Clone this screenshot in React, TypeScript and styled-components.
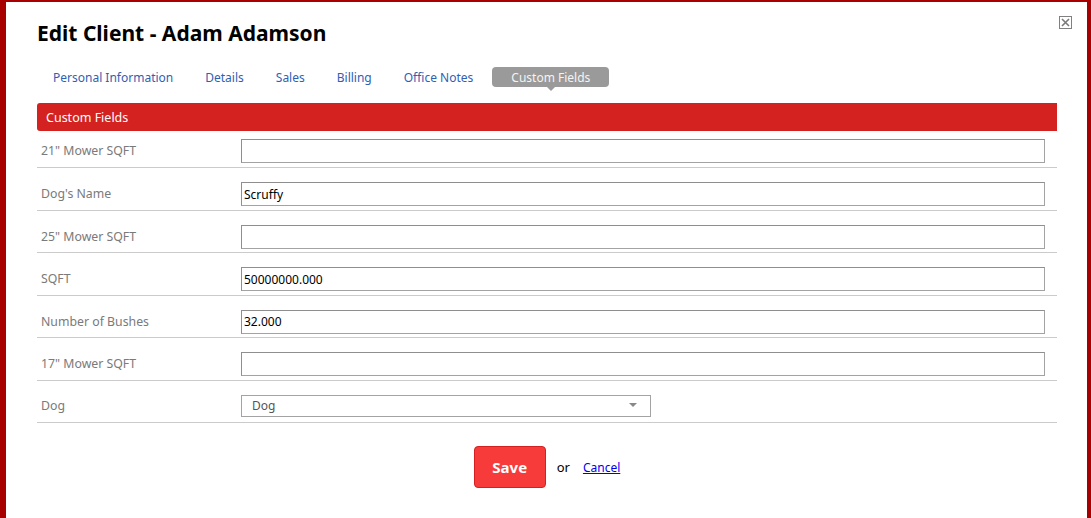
import React from "react";
import styled, { createGlobalStyle } from "styled-components";

const Global = createGlobalStyle`
  html, body { margin: 0; padding: 0; background: #fff; }
  body { font-family: "Noto Sans", "Open Sans", sans-serif; }
  * { box-sizing: border-box; }
`;

const Modal = styled.div`
  position: relative;
  width: 1091px;
  height: 518px;
  border-left: 6px solid #a80000;
  border-top: 2px solid #a80000;
  border-right: 4px solid #a80000;
  padding: 0 30px 0 31px;
  background: #fff;
  overflow: hidden;
`;

const Title = styled.h1`
  margin: 0;
  padding-top: 17px;
  height: 65px;
  font-size: 21px;
  font-weight: 700;
  color: #000;
  line-height: 28px;
`;

const Close = styled.button`
  position: absolute;
  top: 14px;
  right: 15px;
  width: 13px;
  height: 13px;
  padding: 0;
  border: 1px solid #808080;
  background: #fff;
  display: flex;
  align-items: center;
  justify-content: center;
  cursor: pointer;
`;

const Tabs = styled.nav`
  display: flex;
  align-items: center;
  height: 20px;
`;

const Tab = styled.a<{ $active?: boolean }>`
  position: relative;
  display: flex;
  align-items: center;
  height: 20px;
  padding: 0 ${(p) => (p.$active ? 19 : 16)}px;
  margin-left: ${(p) => (p.$active ? 3 : 0)}px;
  font-size: 12px;
  color: ${(p) => (p.$active ? "#f4f4f4" : "#2f5fb3")};
  background: ${(p) => (p.$active ? "#9a9a9a" : "transparent")};
  border-radius: 4px;
  text-decoration: none;
  white-space: nowrap;
  cursor: pointer;
  &::after {
    content: "";
    display: ${(p) => (p.$active ? "block" : "none")};
    position: absolute;
    left: 50%;
    bottom: -4px;
    margin-left: -4px;
    border-left: 4px solid transparent;
    border-right: 4px solid transparent;
    border-top: 4px solid #9a9a9a;
  }
`;

const SectionBar = styled.div`
  margin-top: 16px;
  height: 28px;
  background: #d3221f;
  border-radius: 3px 0 0 3px;
  color: #fff;
  font-size: 12.5px;
  display: flex;
  align-items: center;
  padding-left: 9px;
`;

const Row = styled.div<{ $top: number; $height: number }>`
  display: grid;
  grid-template-columns: 204px 1fr;
  align-items: center;
  height: ${(p) => p.$height}px;
  padding: ${(p) => p.$top}px 12px 4px 0;
  border-bottom: 1px solid #cbcbcb;
`;

const Label = styled.label`
  padding-left: 4px;
  font-size: 12.3px;
  color: #7a7a7a;
  align-self: center;
  margin-top: -1px;
`;

const Input = styled.input`
  width: 100%;
  height: 24px;
  border: 1px solid #a3a3a3;
  border-top-color: #8f8f8f;
  border-left-color: #8f8f8f;
  padding: 0 2px;
  font-family: inherit;
  font-size: 12px;
  color: #000;
  background: #fff;
  outline: none;
`;

const SelectBox = styled.div`
  width: 410px;
  height: 22px;
  border: 1px solid #a3a3a3;
  display: flex;
  align-items: center;
  justify-content: space-between;
  padding: 0 13px 0 10px;
  font-size: 12px;
  color: #555;
`;

const Actions = styled.div`
  display: flex;
  justify-content: center;
  align-items: center;
  margin-top: 23px;
  font-size: 13px;
`;

const SaveButton = styled.button`
  width: 72px;
  height: 42px;
  background: #f73b3b;
  border: 1px solid #d42020;
  border-radius: 4px;
  color: #fff;
  font-family: inherit;
  font-weight: 700;
  font-size: 15px;
  cursor: pointer;
`;

const Or = styled.span`
  margin-left: 11px;
  color: #000;
`;

const CancelLink = styled.a`
  margin-left: 13px;
  color: #0000ee;
  text-decoration: underline;
  font-size: 12px;
  cursor: pointer;
`;

const fields = [
  { label: '21" Mower SQFT', value: "" },
  { label: "Dog's Name", value: "Scruffy" },
  { label: '25" Mower SQFT', value: "" },
  { label: "SQFT", value: "50000000.000" },
  { label: "Number of Bushes", value: "32.000" },
  { label: '17" Mower SQFT', value: "" },
];

const tabs = ["Personal Information", "Details", "Sales", "Billing", "Office Notes", "Custom Fields"];

export default function App() {
  return (
    <>
      <Global />
      <Modal>
        <Title>Edit Client - Adam Adamson</Title>
        <Close aria-label="Close">
          <svg width="9" height="9" viewBox="0 0 9 9">
            <path d="M1 1L8 8M8 1L1 8" stroke="#7a7a7a" strokeWidth="1.6" />
          </svg>
        </Close>
        <Tabs>
          {tabs.map((t) => (
            <Tab key={t} $active={t === "Custom Fields"}>
              {t}
            </Tab>
          ))}
        </Tabs>
        <SectionBar>Custom Fields</SectionBar>
        {fields.map((f, i) => (
          <Row key={f.label} $top={i === 0 ? 8 : 14} $height={i === 0 ? 37 : 42.5}>
            <Label>{f.label}</Label>
            <Input defaultValue={f.value} />
          </Row>
        ))}
        <Row $top={13} $height={42.5}>
          <Label>Dog</Label>
          <SelectBox>
            <span>Dog</span>
            <svg width="8" height="5" viewBox="0 0 8 5">
              <path d="M0 0H8L4 4Z" fill="#888" />
            </svg>
          </SelectBox>
        </Row>
        <Actions>
          <SaveButton>Save</SaveButton>
          <Or>or</Or>
          <CancelLink>Cancel</CancelLink>
        </Actions>
      </Modal>
    </>
  );
}
